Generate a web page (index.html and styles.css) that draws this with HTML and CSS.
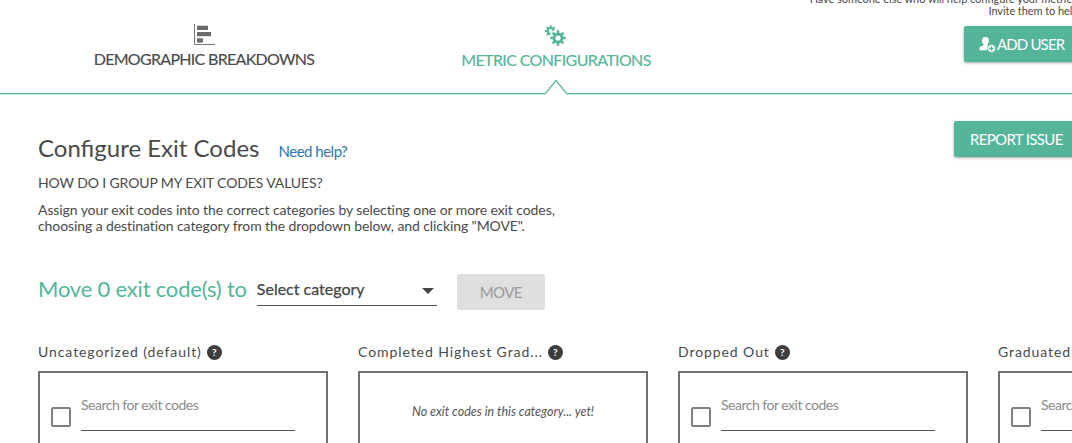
FILE: index.html
```html
<!DOCTYPE html>
<html lang="en">
<head>
<meta charset="utf-8">
<title>Configure Exit Codes</title>
<link rel="stylesheet" href="styles.css">
</head>
<body>
<div class="page">
  <header class="topbar">
    <a class="tab">
      <svg class="tab-icon" width="24" height="24" viewBox="0 0 24 24">
        <path class="axis" d="M2.500 0v20.500H23" />
        <rect class="bar" x="5" y="1.700" width="11" height="4.300"/>
        <rect class="bar" x="5" y="8" width="14" height="4.200"/>
        <rect class="bar" x="5" y="14.300" width="6" height="4.300"/>
      </svg>
      <span>DEMOGRAPHIC BREAKDOWNS</span>
    </a>
    <a class="tab active">
      <svg class="tab-icon" width="24" height="24" viewBox="0 0 24 24">
        <circle class="gear-ring small" cx="6.700" cy="7" r="3"/>
        <path class="gear-teeth small" d="M6.700 1.300v2M6.700 10.700v2M1 7h2M10.400 7h2M2.700 3l1.400 1.400M9.300 9.600l1.400 1.400M2.700 11l1.400-1.400M9.300 4.400L10.700 3"/>
        <circle class="gear-halo" cx="14" cy="14" r="8.500"/>
        <circle class="gear-ring big" cx="14" cy="14" r="4"/>
        <path class="gear-teeth big" d="M14 6.300v3M14 18.700v3M6.300 14h3M18.700 14h3M8.600 8.600l2.100 2.100M17.300 17.300l2.100 2.100M8.600 19.400l2.100-2.100M17.300 10.700l2.100-2.100"/>
      </svg>
      <span>METRIC CONFIGURATIONS</span>
      <svg class="notch" width="24" height="16" viewBox="0 0 24 16">
        <path class="notch-fill" d="M1.500 16v-1.500L12 1.500l10.500 13V16z"/>
        <path class="notch-line" d="M0 14.500h1.500L12 1.500l10.500 13H24"/>
      </svg>
    </a>
    <div class="invite">
      <p class="invite-text">Have someone else who will help configure your metrics?<br>Invite them to help.</p>
      <button class="btn add-user">
        <svg width="17" height="17" viewBox="0 0 17 17">
          <path class="user" d="M6.500 1c2.300 0 3.600 1.700 3.500 3.800-.1 1.500-.7 2.700-1.500 3.500v1.300l1.500.7a4.500 4.500 0 0 0-1.800 3.700v.2H.6c-.3-1.700.1-3.500 1.400-4l2.500-.9V8.300C3.700 7.500 3 6.300 3 4.800 3 2.700 4.200 1 6.500 1z"/>
          <circle class="plus-bg" cx="12.500" cy="12.500" r="4"/>
          <path class="plus" d="M12.500 10.300v4.400M10.300 12.500h4.400"/>
        </svg>
        ADD USER
      </button>
    </div>
  </header>

  <main class="content">
    <div class="intro-row">
      <div class="intro">
        <div class="title-row">
          <h1>Configure Exit Codes</h1>
          <a class="help-link">Need help?</a>
        </div>
        <h2>HOW DO I GROUP MY EXIT CODES VALUES?</h2>
        <p class="desc">Assign your exit codes into the correct categories by selecting one or more exit codes,<br>choosing a destination category from the dropdown below, and clicking "MOVE".</p>
      </div>
      <button class="btn report">REPORT ISSUE</button>
    </div>

    <div class="move-row">
      <span class="move-label">Move 0 exit code(s) to</span>
      <div class="select">
        <span>Select category</span>
        <i class="caret"></i>
      </div>
      <button class="move-btn">MOVE</button>
    </div>

    <div class="columns">
      <section class="column">
        <h3>Uncategorized (default) <span class="q">?</span></h3>
        <div class="box">
          <div class="search-row"><span class="check"></span><span class="search">Search for exit codes</span></div>
        </div>
      </section>
      <section class="column">
        <h3>Completed Highest Grad... <span class="q">?</span></h3>
        <div class="box">
          <p class="empty">No exit codes in this category... yet!</p>
        </div>
      </section>
      <section class="column">
        <h3>Dropped Out <span class="q">?</span></h3>
        <div class="box">
          <div class="search-row"><span class="check"></span><span class="search">Search for exit codes</span></div>
        </div>
      </section>
      <section class="column">
        <h3>Graduated <span class="q">?</span></h3>
        <div class="box">
          <div class="search-row"><span class="check"></span><span class="search">Search for exit codes</span></div>
        </div>
      </section>
    </div>
  </main>
</div>
</body>
</html>
```
FILE: styles.css
```css
* { box-sizing: border-box; }
html, body { margin: 0; height: 100%; overflow: hidden; background: #fff; }
body { font-family: Lato, "Open Sans", sans-serif; color: #4a4a4a; }
.page { width: 1072px; height: 443px; overflow: hidden; }

.topbar {
  display: flex;
  height: 94px;
  padding-left: 28px;
  border-bottom: 1px solid #55b59a;
  box-shadow: 0 1px 0 rgba(85, 181, 154, .3);
}
.tab {
  position: relative;
  flex: 0 0 352px;
  display: flex;
  flex-direction: column;
  align-items: center;
  padding-top: 24px;
  font-size: 16px;
  line-height: 20px;
  letter-spacing: -.7px;
  -webkit-text-stroke: .15px currentColor;
}
.tab-icon { display: block; margin-bottom: 1px; }
.tab.active { color: #55b59a; letter-spacing: -.63px; }
.tab.active .tab-icon { margin-bottom: 2px; }
.axis { fill: none; stroke: #777; stroke-width: 1; }
.bar { fill: #6b6b6b; }
.gear-ring { fill: none; stroke: #55b59a; }
.gear-ring.small { stroke-width: 2; }
.gear-ring.big { stroke-width: 2.800; }
.gear-halo { fill: #fff; }
.gear-teeth { fill: none; stroke: #55b59a; }
.gear-teeth.small { stroke-width: 1.800; }
.gear-teeth.big { stroke-width: 2.500; }
.notch {
  position: absolute;
  left: 164px;
  bottom: -2px;
}
.notch-fill { fill: #fff; }
.notch-line { fill: none; stroke: #55b59a; stroke-width: 1.200; }

.invite {
  flex: 0 0 auto;
  width: 320px;
  margin-left: 29px;
  margin-top: -7px;
  text-align: right;
  font-size: 11px;
  line-height: 12px;
  letter-spacing: -.07px;
}
.invite-text { margin: 0 0 9px; }
.btn {
  border: 0;
  border-radius: 2px;
  background: #55b59a;
  color: #fff;
  font-family: inherit;
  font-size: 15px;
  height: 36px;
  letter-spacing: -.65px;
  text-align: left;
  box-shadow: 0 1px 3px rgba(0, 0, 0, .35);
}
.add-user {
  display: inline-flex;
  align-items: center;
  gap: 1px;
  width: 117px;
  padding: 0 0 0 15px;
  letter-spacing: -.85px;
}
.user, .plus-bg { fill: #fff; }
.plus-bg { stroke: #55b59a; stroke-width: .8; }
.plus { stroke: #55b59a; stroke-width: 1.300; }

.content { padding: 27px 0 0 38px; }
.intro-row { display: flex; justify-content: space-between; width: 1052px; height: 153px; }
.title-row { display: flex; align-items: baseline; gap: 19px; margin-top: 12px; }
h1 { margin: 0; font-size: 24px; font-weight: 400; line-height: 30px; }
.help-link { color: #2f74b5; font-size: 15px; letter-spacing: -.5px; }
h2 { margin: 11px 0 0; font-size: 14px; font-weight: 400; line-height: 18px; letter-spacing: -.12px; }
.desc { margin: 10px 0 0; font-size: 14px; line-height: 16px; letter-spacing: -.09px; }
.report { width: 136px; padding: 0 0 0 16px; }

.move-row { display: flex; align-items: flex-start; height: 69px; }
.move-label { color: #55b59a; font-size: 22px; line-height: 30px; letter-spacing: -.2px; }
.select {
  display: flex;
  justify-content: space-between;
  align-items: center;
  width: 180px;
  height: 29px;
  margin: 3px 0 0 10px;
  padding: 0 3px 5px 0;
  border-bottom: 1px solid #555;
  font-size: 16px;
  color: #444;
  -webkit-text-stroke: .25px currentColor;
}
.caret {
  width: 0;
  height: 0;
  margin-top: 4px;
  border: 6px solid transparent;
  border-top: 6px solid #444;
  border-bottom: 0;
}
.move-btn {
  width: 88px;
  height: 36px;
  margin: 0 0 0 20px;
  border: 0;
  border-radius: 2px;
  background: #dfdfdf;
  color: #9a9a9a;
  font-family: inherit;
  font-size: 15px;
  letter-spacing: -.6px;
}

.columns { display: flex; gap: 30px; width: 1400px; }
.column { flex: 0 0 290px; }
h3 {
  display: flex;
  align-items: center;
  gap: 5px;
  margin: 0 0 10px;
  font-size: 14px;
  font-weight: 400;
  line-height: 18px;
  letter-spacing: .92px;
  white-space: nowrap;
}
.q {
  flex: 0 0 15px;
  height: 15px;
  border-radius: 50%;
  background: #3d3d3d;
  color: #fff;
  font-size: 10px;
  font-weight: 700;
  line-height: 15px;
  text-align: center;
  letter-spacing: 0;
}
.box { height: 120px; border: 2px solid #707070; }
.search-row { display: flex; align-items: flex-end; padding: 20px 0 0 11px; gap: 10px; }
.check { flex: 0 0 20px; height: 20px; margin-bottom: 4px; border: 2px solid #808080; border-radius: 2px; }
.search {
  width: 214px;
  height: 38px;
  border-bottom: 1px solid #555;
  color: #8a8a8a;
  font-size: 14px;
  line-height: 24px;
  letter-spacing: -.5px;
}
.empty { margin: 30px 0 0; text-align: center; font-size: 12.500px; font-style: italic; line-height: 18px; color: #555; }
```
